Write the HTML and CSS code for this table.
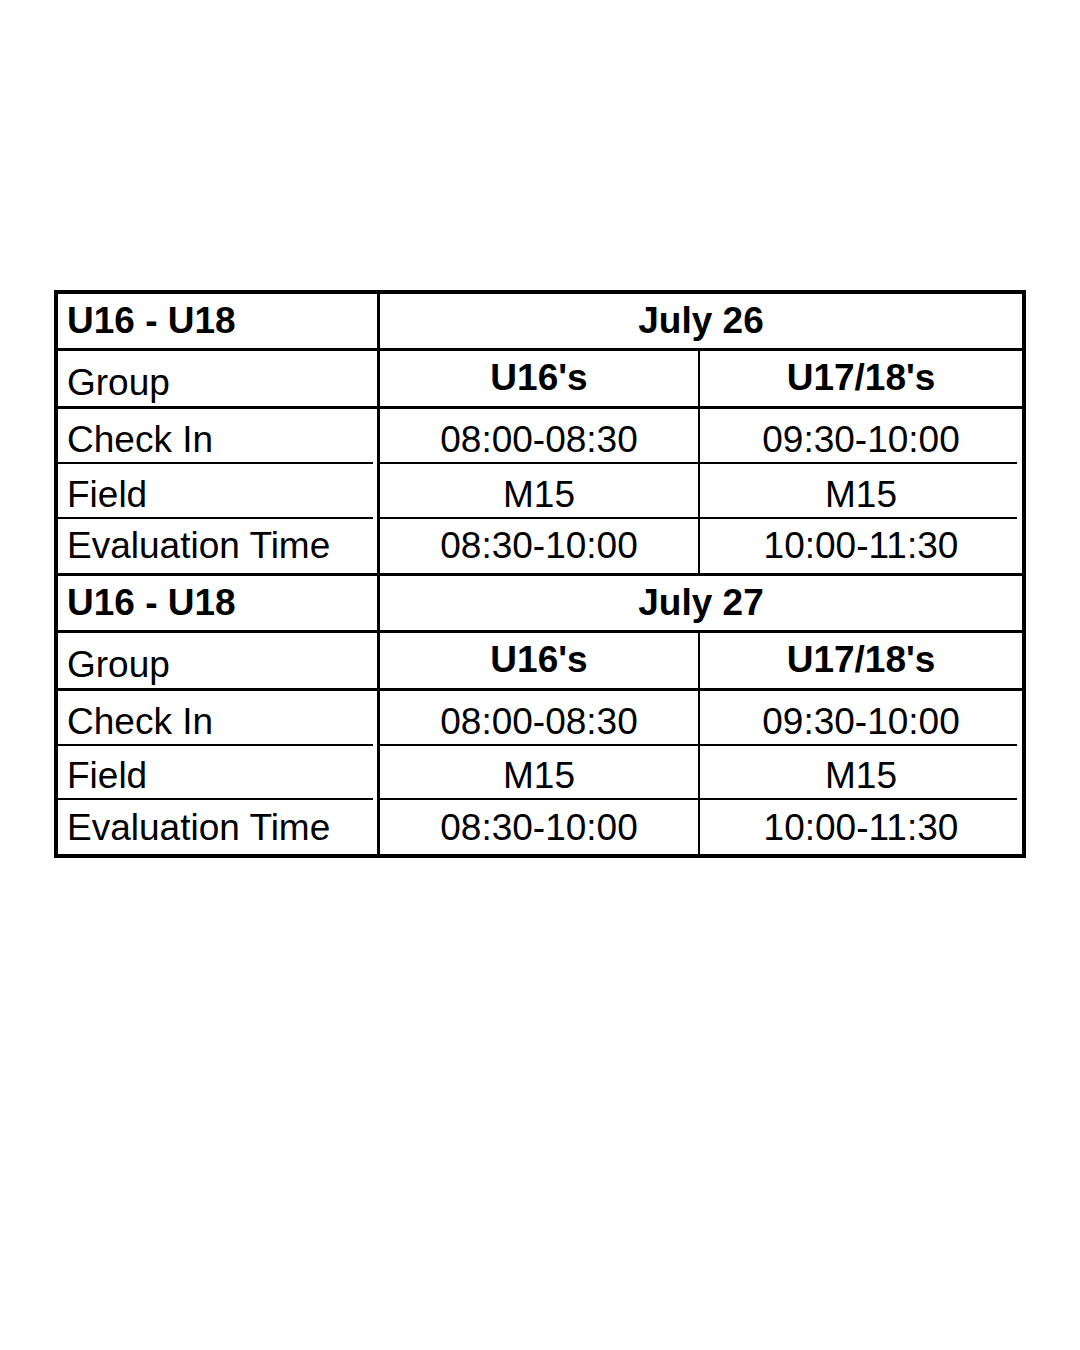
FILE: index.html
```html
<!DOCTYPE html>
<html lang="en">
<head>
<meta charset="utf-8">
<title>U16 - U18 Evaluation Schedule</title>
<link rel="stylesheet" href="styles.css">
</head>
<body>
<div class="sheet">
  <div class="row r-head thick">
    <div class="cell label bold">U16 - U18</div>
    <div class="cell span bold">July 26</div>
  </div>
  <div class="row r-group thick">
    <div class="cell label">Group</div>
    <div class="cell mid bold">U16's</div>
    <div class="cell right bold">U17/18's</div>
  </div>
  <div class="row r-check thin">
    <div class="cell label">Check In</div>
    <div class="cell mid">08:00-08:30</div>
    <div class="cell right">09:30-10:00</div>
  </div>
  <div class="row r-field thin">
    <div class="cell label">Field</div>
    <div class="cell mid">M15</div>
    <div class="cell right">M15</div>
  </div>
  <div class="row r-eval thick">
    <div class="cell label">Evaluation Time</div>
    <div class="cell mid">08:30-10:00</div>
    <div class="cell right">10:00-11:30</div>
  </div>
  <div class="row r-head thick">
    <div class="cell label bold">U16 - U18</div>
    <div class="cell span bold">July 27</div>
  </div>
  <div class="row r-group thick">
    <div class="cell label">Group</div>
    <div class="cell mid bold">U16's</div>
    <div class="cell right bold">U17/18's</div>
  </div>
  <div class="row r-check2 thin">
    <div class="cell label">Check In</div>
    <div class="cell mid">08:00-08:30</div>
    <div class="cell right">09:30-10:00</div>
  </div>
  <div class="row r-field2 thin">
    <div class="cell label">Field</div>
    <div class="cell mid">M15</div>
    <div class="cell right">M15</div>
  </div>
  <div class="row r-eval2">
    <div class="cell label">Evaluation Time</div>
    <div class="cell mid">08:30-10:00</div>
    <div class="cell right">10:00-11:30</div>
  </div>
</div>
</body>
</html>
```

FILE: styles.css
```css
html, body {
  margin: 0;
  padding: 0;
  background: #ffffff;
}

body {
  width: 1080px;
  height: 1350px;
  font-family: "Liberation Sans", Arial, sans-serif;
  color: #000000;
}

.sheet {
  box-sizing: border-box;
  margin: 290px 0 0 54px;
  width: 972px;
  border: 4px solid #000000;
  display: flex;
  flex-direction: column;
}

.row {
  box-sizing: border-box;
  display: grid;
  grid-template-columns: 322px 320px 1fr;
}

.row.thick { border-bottom: 3px solid #000000; }

.r-head { height: 57px; }
.r-group { height: 58px; }
.r-check { height: 54px; }
.r-field { height: 55px; }
.r-eval { height: 58px; }
.r-check2 { height: 53px; }
.r-field2 { height: 56px; }
.r-eval2 { height: 54px; }

.cell {
  box-sizing: border-box;
  display: flex;
  align-items: center;
  justify-content: center;
  font-size: 37px;
  line-height: 1.15;
  white-space: nowrap;
}

.cell.label {
  justify-content: flex-start;
  padding-left: 9px;
  border-right: 3px solid #000000;
}

.cell.mid {
  border-right: 2px solid #000000;
}

.cell.span {
  grid-column: 2 / 4;
}

.bold {
  font-weight: bold;
}

.r-group .label { padding-top: 10px; }
.r-eval .cell, .r-eval2 .cell { padding-top: 2px; }

.thin .cell {
  padding-bottom: 2px;
  background-image: linear-gradient(#000000, #000000);
  background-repeat: no-repeat;
  background-position: left bottom;
}
.thin .cell.label { background-size: calc(100% - 4px) 2px; }
.thin .cell.mid { background-size: 100% 2px; }
.thin .cell.right { background-size: calc(100% - 5px) 2px; }

.r-check .cell, .r-check2 .cell { padding-top: 10px; }
.r-field .cell, .r-field2 .cell { padding-top: 11px; }
```
